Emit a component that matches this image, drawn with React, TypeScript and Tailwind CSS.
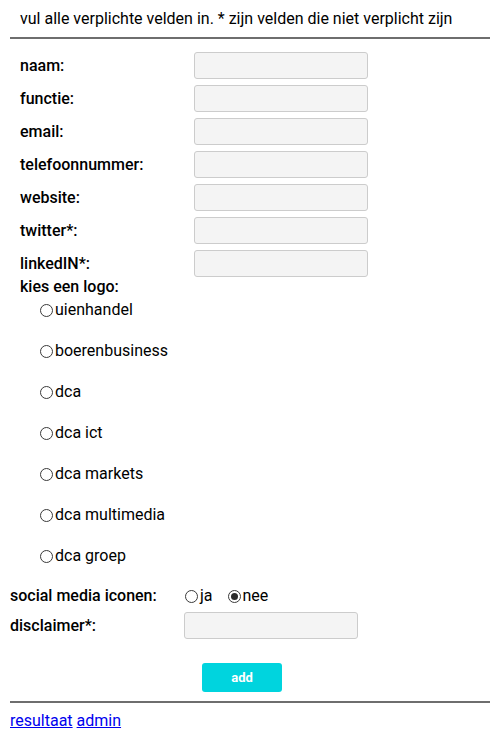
import React from "react";

function Radio({ checked = false }: { checked?: boolean }) {
  return (
    <span className="w-[13px] h-[13px] rounded-full border border-[#3a3a3a] bg-white flex items-center justify-center shrink-0">
      {checked && <span className="w-[7px] h-[7px] rounded-full bg-[#2a2a2a]" />}
    </span>
  );
}

export default function App() {
  const fields = ["naam:", "functie:", "email:", "telefoonnummer:", "website:", "twitter*:", "linkedIN*:"];
  const logos = ["uienhandel", "boerenbusiness", "dca", "dca ict", "dca markets", "dca multimedia", "dca groep"];
  return (
    <div className="w-[500px] h-[740px] bg-white px-[10px] font-['Roboto',sans-serif] text-[16px] text-black">
      <div className="pl-[10px] pt-[7px] h-[30px] leading-[24px]">
        vul alle verplichte velden in. * zijn velden die niet verplicht zijn
      </div>
      <div className="h-[2px] bg-[#6e6e6e] mt-[7px]" />
      <div className="pt-[13px] pl-[10px]">
        {fields.map((f, i) => (
          <div key={f} className={"flex items-center h-[27px] " + (i < fields.length - 1 ? "mb-[6px]" : "")}>
            <div className="w-[174px] font-medium leading-[20px]">{f}</div>
            <div className="w-[174px] h-[27px] bg-[#f4f4f4] border border-[#cccccc] rounded-[3px]" />
          </div>
        ))}
        <div className="h-[21px] leading-[20px] font-medium">kies een logo:</div>
        <div className="pl-[20px] pt-[2px]">
          {logos.map((l) => (
            <div key={l} className="flex items-center h-[20px] mb-[21px] leading-[20px]">
              <Radio />
              <span className="ml-[2px]">{l}</span>
            </div>
          ))}
        </div>
      </div>
      <div className="flex items-center h-[20px] leading-[20px] -mt-[1px]">
        <div className="w-[175px] font-medium">social media iconen:</div>
        <Radio />
        <span className="ml-[2px]">ja</span>
        <span className="ml-[15px]">
          <Radio checked />
        </span>
        <span className="ml-[2px]">nee</span>
      </div>
      <div className="flex items-center h-[27px] mt-[6px]">
        <div className="w-[174px] font-medium leading-[20px]">disclaimer*:</div>
        <div className="w-[174px] h-[27px] bg-[#f4f4f4] border border-[#cccccc] rounded-[3px]" />
      </div>
      <div className="mt-[24px] ml-[192px] w-[80px] h-[29px] bg-[#00d4de] rounded-[3px] flex items-center justify-center text-white font-bold text-[13px]">
        add
      </div>
      <div className="h-[2px] bg-[#6e6e6e] mt-[9px]" />
      <div className="mt-[8px] leading-[20px]">
        <a href="#" className="text-[#0000ee] underline">resultaat</a>{" "}
        <a href="#" className="text-[#0000ee] underline">admin</a>
      </div>
    </div>
  );
}
